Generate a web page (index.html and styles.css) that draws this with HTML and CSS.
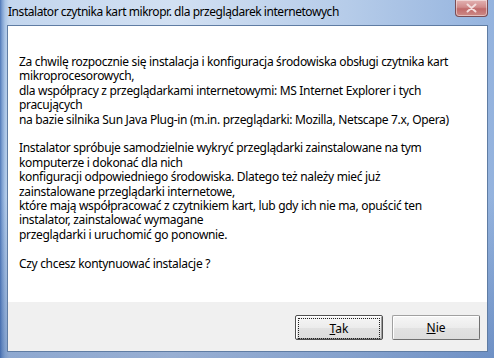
FILE: index.html
```html
<html>
    <head>
        <meta charset="utf-8" />
        <title>Instalator czytnika kart</title>
        <link rel="stylesheet" href="styles.css">
    </head>
    <body>
        <div class="window">
            <div class="titlebar">
                <span class="title">Instalator czytnika kart mikropr. dla przeglądarek internetowych</span>
                <span class="close">
                    <svg width="11" height="10" viewBox="0 0 11 10">
                        <path d="M1.5 1.5 L9.5 8.5 M9.5 1.5 L1.5 8.5" stroke="#f3dede" stroke-width="2" stroke-linecap="round"/>
                    </svg>
                </span>
            </div>
            <div class="client">
                <div class="content">
                    <p>Za chwilę rozpocznie się instalacja i konfiguracja środowiska obsługi czytnika kart<br>
                    mikroprocesorowych,<br>
                    dla współpracy z przeglądarkami internetowymi: MS Internet Explorer i tych<br>
                    pracujących<br>
                    na bazie silnika Sun Java Plug-in (m.in. przeglądarki: Mozilla, Netscape 7.x, Opera)</p>
                    <p>Instalator spróbuje samodzielnie wykryć przeglądarki zainstalowane na tym<br>
                    komputerze i dokonać dla nich<br>
                    konfiguracji odpowiedniego środowiska. Dlatego też należy mieć już<br>
                    zainstalowane przeglądarki internetowe,<br>
                    które mają współpracować z czytnikiem kart, lub gdy ich nie ma, opuścić ten<br>
                    instalator, zainstalować wymagane<br>
                    przeglądarki i uruchomić go ponownie.</p>
                    <p>Czy chcesz kontynuować instalacje ?</p>
                </div>
                <div class="buttons">
                    <button class="btn default"><span class="focus"><u>T</u>ak</span></button>
                    <button class="btn"><u>N</u>ie</button>
                </div>
            </div>
        </div>
    </body>
</html>
```

FILE: styles.css
```css
body {
    margin: 0;
    font-family: "Noto Sans", "Open Sans", sans-serif;
    font-size: 12px;
    color: #000;
}
.window {
    width: 494px;
    height: 358px;
    display: flex;
    flex-direction: column;
    background:
        linear-gradient(to bottom, rgba(40, 80, 150, 0) 0%, rgba(40, 80, 150, 0) 55%, rgba(40, 80, 150, 0.35) 100%),
        linear-gradient(to right, #4f78b8 0px, #7d9fd0 2px, #a9c4e6 5px, #c3d6ee 9px, #d2e0f2 35%, #b6cce9 70%, #94b3de 100%);
}
.titlebar {
    height: 25px;
    display: flex;
    align-items: flex-start;
    flex-shrink: 0;
}
.title {
    padding: 5px 0 0 8px;
    font-size: 12px;
    line-height: 14px;
    letter-spacing: -0.45px;
    color: #000;
}
.close {
    margin-left: auto;
    margin-right: 6px;
    width: 31px;
    height: 16px;
    border: 1px solid #7a4d55;
    border-top: 0;
    border-radius: 0 0 4px 4px;
    background: linear-gradient(to bottom, #e3b3b3 0%, #d08b8b 45%, #c06a6a 55%, #cd8a87 100%);
    box-shadow: inset 0 0 0 1px rgba(255, 255, 255, 0.45);
    display: flex;
    align-items: center;
    justify-content: center;
}
.client {
    flex: 1;
    margin: 0 6px 6px 7px;
    border: 1px solid #5f7ca3;
    display: flex;
    flex-direction: column;
    background: #f0f0f0;
}
.content {
    flex: 1;
    background: #fff;
    padding: 29px 10px 0 11px;
    letter-spacing: -0.32px;
}
.content p {
    margin: 0 0 14.4px 0;
    line-height: 14.4px;
}
.buttons {
    height: 49px;
    flex-shrink: 0;
    display: flex;
    justify-content: flex-end;
    align-items: flex-start;
    gap: 9px;
    padding: 13px 7px 0 0;
    box-sizing: border-box;
}
.btn {
    width: 88px;
    height: 25px;
    font-family: "Noto Sans", "Open Sans", sans-serif;
    font-size: 12px;
    border: 1px solid #a0a0a0;
    border-right-color: #707070;
    border-bottom-color: #707070;
    border-radius: 2px;
    background: linear-gradient(to bottom, #f6f6f6 0%, #ececec 50%, #e2e2e2 51%, #dcdcdc 100%);
    box-shadow: inset 1px 1px 0 #fff;
    padding: 0;
    color: #000;
}
.btn.default {
    border: 1px solid #505050;
    box-shadow: inset 1px 1px 0 #fff, inset -1px -1px 0 #a0a0a0;
}
.focus {
    display: block;
    margin: 2px;
    height: 19px;
    line-height: 19px;
    border: 1px dotted #202020;
}
```
